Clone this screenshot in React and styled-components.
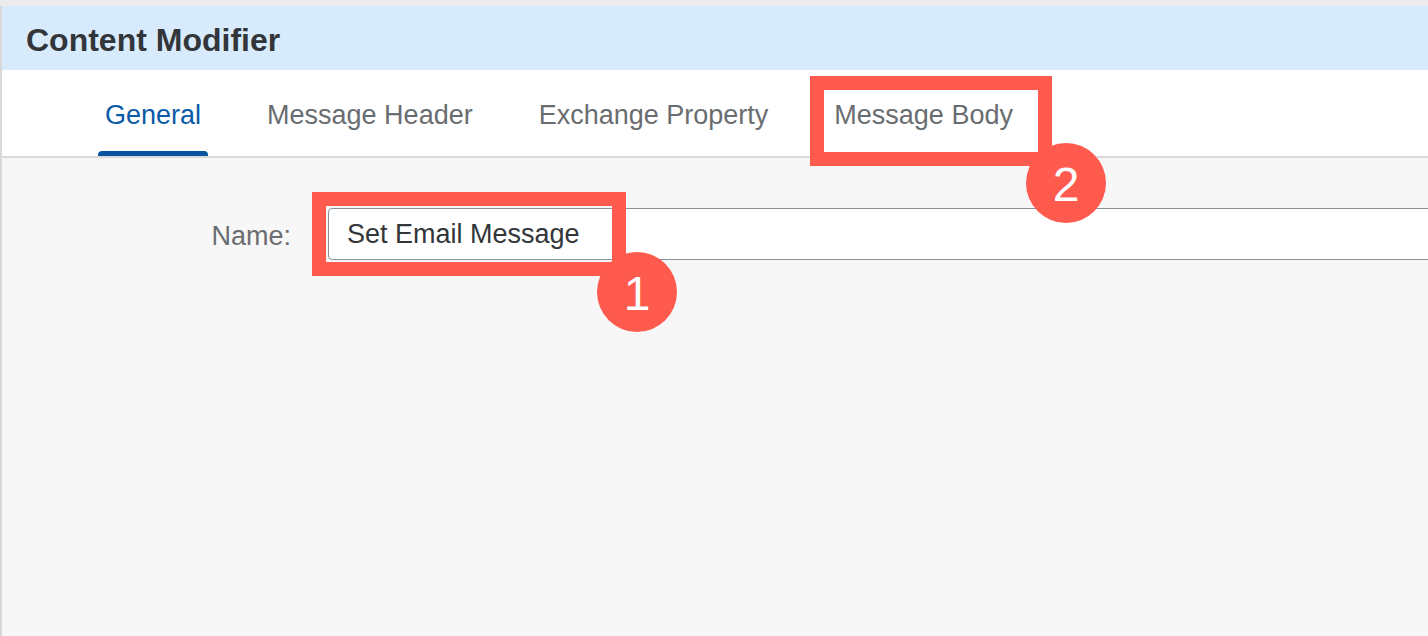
import React from 'react';
import styled, { createGlobalStyle } from 'styled-components';

const GlobalStyle = createGlobalStyle`
  html, body {
    margin: 0;
    padding: 0;
  }

  body {
    font-family: "Liberation Sans", Arial, sans-serif;
    background: #ececec;
  }
`;

const tabs = ['General', 'Message Header', 'Exchange Property', 'Message Body'];

function App() {
  return (
    <Page>
      <GlobalStyle />
      <Panel>
        <Header>Content Modifier</Header>
        <TabBar>
          {tabs.map((tab, i) => (
            <Tab key={tab} $active={i === 0}>
              <span>{tab}</span>
              <Indicator $active={i === 0} />
            </Tab>
          ))}
        </TabBar>
        <Content>
          <FormRow>
            <Label>Name:</Label>
            <TextInput readOnly defaultValue="Set Email Message" />
          </FormRow>
        </Content>
      </Panel>

      {/* callout annotations drawn over the screen */}
      <Frame $left={312} $top={192} $width={314} $height={84} />
      <Frame $left={810} $top={76} $width={242} $height={90} />
      <Step $left={597} $top={252}>1</Step>
      <Step $left={1026} $top={143}>2</Step>
    </Page>
  );
}

const Page = styled.div`
  position: relative;
  height: 100vh;
  padding-top: 6px;
  box-sizing: border-box;
  overflow: hidden;
  background: #ececec;
`;

const Panel = styled.div`
  display: flex;
  flex-direction: column;
  height: 100%;
  border-left: 2px solid #d9d9d9;
  background: #f7f7f7;
`;

const Header = styled.div`
  height: 64px;
  box-sizing: border-box;
  padding: 16px 0 0 24px;
  background: #d8ebfc;
  color: #32363a;
  font-size: 32px;
  font-weight: 700;
  line-height: 36px;
`;

const TabBar = styled.div`
  display: flex;
  gap: 52px;
  height: 88px;
  box-sizing: border-box;
  padding-left: 96px;
  background: #fff;
  border-bottom: 2px solid #d9d9d9;
`;

const Tab = styled.div`
  display: flex;
  flex-direction: column;
  padding: 30px 7px 0;
  font-size: 27px;
  line-height: 30px;
  color: ${(p) => (p.$active ? '#0a5aa6' : '#6a6d70')};
  white-space: nowrap;
`;

const Indicator = styled.div`
  margin: auto -7px 0;
  height: 5px;
  border-radius: 4px 4px 0 0;
  background: ${(p) => (p.$active ? '#0854a0' : 'transparent')};
`;

const Content = styled.div`
  flex: 1;
  padding-top: 50px;
`;

const FormRow = styled.div`
  display: grid;
  grid-template-columns: 289px 1200px;
  column-gap: 37px;
  align-items: center;
`;

const Label = styled.label`
  padding-top: 3px;
  text-align: right;
  font-size: 27px;
  line-height: 30px;
  color: #6a6d70;
`;

const TextInput = styled.input`
  height: 52px;
  box-sizing: border-box;
  padding: 0 0 0 18px;
  border: 1.5px solid #89919a;
  border-radius: 4px;
  background: #fff;
  font-family: "Liberation Sans", Arial, sans-serif;
  font-size: 27px;
  color: #32363a;
  outline: none;
`;

const Frame = styled.div`
  position: absolute;
  left: ${(p) => p.$left}px;
  top: ${(p) => p.$top}px;
  width: ${(p) => p.$width}px;
  height: ${(p) => p.$height}px;
  box-sizing: border-box;
  border: 14px solid #ff5a4e;
`;

const Step = styled.div`
  position: absolute;
  left: ${(p) => p.$left}px;
  top: ${(p) => p.$top}px;
  width: 80px;
  height: 80px;
  display: flex;
  align-items: center;
  justify-content: center;
  padding-top: 4px;
  box-sizing: border-box;
  border-radius: 50%;
  background: #ff5a4e;
  color: #fff;
  font-size: 48px;
  line-height: 1;
`;

export default App;
